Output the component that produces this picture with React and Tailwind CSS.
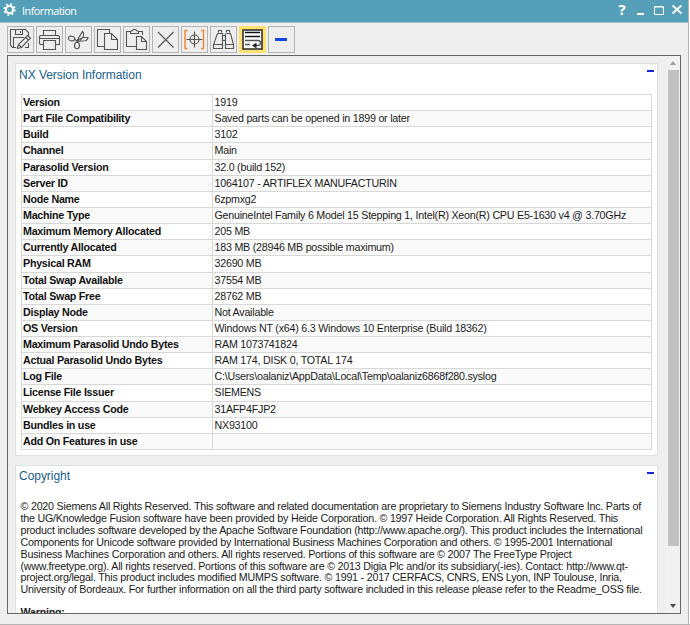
import React from "react";

const rows = [
  ["Version", "1919"],
  ["Part File Compatibility", "Saved parts can be opened in 1899 or later"],
  ["Build", "3102"],
  ["Channel", "Main"],
  ["Parasolid Version", "32.0 (build 152)"],
  ["Server ID", "1064107 - ARTIFLEX MANUFACTURIN"],
  ["Node Name", "6zpmxg2"],
  ["Machine Type", "GenuineIntel Family 6 Model 15 Stepping 1, Intel(R) Xeon(R) CPU E5-1630 v4 @ 3.70GHz"],
  ["Maximum Memory Allocated", "205 MB"],
  ["Currently Allocated", "183 MB (28946 MB possible maximum)"],
  ["Physical RAM", "32690 MB"],
  ["Total Swap Available", "37554 MB"],
  ["Total Swap Free", "28762 MB"],
  ["Display Node", "Not Available"],
  ["OS Version", "Windows NT (x64) 6.3 Windows 10 Enterprise (Build 18362)"],
  ["Maximum Parasolid Undo Bytes", "RAM 1073741824"],
  ["Actual Parasolid Undo Bytes", "RAM 174, DISK 0, TOTAL 174"],
  ["Log File", "C:\\Users\\oalaniz\\AppData\\Local\\Temp\\oalaniz6868f280.syslog"],
  ["License File Issuer", "SIEMENS"],
  ["Webkey Access Code", "31AFP4FJP2"],
  ["Bundles in use", "NX93100"],
  ["Add On Features in use", ""],
];

const copyright = [
  "© 2020 Siemens All Rights Reserved. This software and related documentation are proprietary to Siemens Industry Software Inc. Parts of",
  "the UG/Knowledge Fusion software have been provided by Heide Corporation. © 1997 Heide Corporation. All Rights Reserved. This",
  "product includes software developed by the Apache Software Foundation (http://www.apache.org/). This product includes the International",
  "Components for Unicode software provided by International Business Machines Corporation and others. © 1995-2001 International",
  "Business Machines Corporation and others. All rights reserved. Portions of this software are © 2007 The FreeType Project",
  "(www.freetype.org). All rights reserved. Portions of this software are © 2013 Digia Plc and/or its subsidiary(-ies). Contact: http://www.qt-",
  "project.org/legal. This product includes modified MUMPS software. © 1991 - 2017 CERFACS, CNRS, ENS Lyon, INP Toulouse, Inria,",
  "University of Bordeaux. For further information on all the third party software included in this release please refer to the Readme_OSS file.",
];

function Icon({ children }) {
  return (
    <svg className="block size-[25px]" viewBox="0 0 25 25" fill="none" stroke="#555" strokeWidth="1.1">
      {children}
    </svg>
  );
}

const tools = [
  <Icon key="save">
    <path d="M8 20.500H4.500L2.500 18.500V2.500H17.500L20.500 5.500V9M20.500 16V20.500H17" />
    <path d="M7.500 2.500V7.500H14.500V2.500M12.500 4V6M5.500 20V10.500H16" />
    <path d="M9 21.500L10.500 17.500L19.500 8.500L22.500 11L13.500 20.500L9 21.500M17.500 10.500L20.500 13M10.500 17.500L13.500 20.500" fill="#eee" />
  </Icon>,
  <Icon key="print">
    <path d="M6.500 8.500V3.500H18.500V8.500M6.500 17.500H3.500L2.500 16.500V9.500L3.500 8.500H21.500L22.500 9.500V17.500H18.500M3 11.500H22" />
    <path d="M6.500 13.500H18.500V22.500H6.500Z" />
  </Icon>,
  <Icon key="cut">
    <ellipse cx="5.500" cy="11.500" rx="3.200" ry="2.300" transform="rotate(12 5.500 11.500)" />
    <ellipse cx="11" cy="18.500" rx="2.500" ry="3.200" />
    <path d="M8.500 12L11 14.500L19 13.800Q22 13 22 10.500L17 10.500L12.500 12.500M11 15.500L12.500 11L16.500 4.500Q18.500 6.500 17 10L14 13.500" />
    <circle cx="12" cy="13.300" r=".8" />
  </Icon>,
  <Icon key="copy">
    <path d="M9 19.500H2.500V2.500H14.500V6" />
    <path d="M9.500 6.500H16.500L22.500 12.500V22.500H9.500ZM16.500 6.500V12.500H22.500" />
  </Icon>,
  <Icon key="paste">
    <path d="M12 19.500H2.500V4.500H6.500M14 4.500H18.500V8" />
    <path d="M6.500 6.500V4.500L8.500 3.500L9.500 2.500H11.500L12.500 3.500L14.500 4.500V6.500Z" />
    <path d="M12.500 9.500H17.500L22.500 14.500V22.500H12.500ZM17.500 9.500V14.500H22.500" />
  </Icon>,
  <Icon key="delete"><path d="M5 5L20.500 20.500M20.500 5L5 20.500" /></Icon>,
  <Icon key="target">
    <path d="M5.500 3.500H3V21.500H5.500M19 3.500H21.500V21.500H19" stroke="#f28a36" strokeWidth="1.5" />
    <circle cx="12.500" cy="12.500" r="4.500" /><path d="M12.500 4.500V20.500M4.500 12.500H20.500" />
  </Icon>,
  <Icon key="find">
    <path d="M7.500 5.500V3.500H10.500V5.500M15.500 5.500V3.500H18.500V5.500M6.500 6.500H11.500V21.500H2.500V17.500L6.500 6.500M15.500 6.500H19.500L22.500 17.500V21.500H14.500V6.500M2.500 17.500H11.500M14.500 17.500H22.500M11.500 8.500H14.500M11.500 13.500H14.500" />
  </Icon>,
  <Icon key="wrap">
    <rect x="3" y="3" width="19" height="19" fill="#fff" stroke="#333" strokeWidth="1.600" />
    <path d="M5 5.500H20M5 9.500H20" stroke="#111" strokeWidth="1.300" />
    <path d="M5 13.500H18Q20.500 13.500 20.500 16Q20.500 18.500 18 18.500H14M5 17.500H10" stroke="#555" strokeWidth="1.300" />
    <path d="M12 18.500L16.500 15.500V21.500Z" fill="#222" stroke="none" />
  </Icon>,
  <Icon key="collapse"><rect x="6" y="11" width="12" height="3" fill="#1444e4" stroke="none" /></Icon>,
];

function Card({ title, className, titleClass, children }) {
  return (
    <section className={"w-[643px] shrink-0 border border-[#e1e1e1] bg-white " + className}>
      <header className="flex h-[30px] justify-between pl-[3px] pr-[3px]">
        <h2 className={"text-[12px] leading-4 tracking-[-0.04px] text-[#17608a] " + titleClass}>{title}</h2>
        <span className="mt-[6px] h-[2px] w-[7px] bg-[#1428d8]" />
      </header>
      {children}
    </section>
  );
}

export default function App() {
  return (
    <div className="flex h-[625px] w-[690px] flex-col overflow-hidden bg-[#efefef] font-['Liberation_Sans',Arial,sans-serif]">
      <div className="flex min-h-0 flex-1">
        <main className="flex w-[688px] flex-col">
          <header className="flex h-[23px] items-center justify-between border-b border-[#9fc5d3] bg-[#559fb8] pl-[3px] pr-[5px] text-white">
            <div className="flex items-center gap-[6px]">
              <svg className="mb-[3px] size-[13px]" viewBox="0 0 13 13" fill="none" stroke="white">
                <circle cx="6.500" cy="6.500" r="3.600" strokeWidth="2" />
                <circle cx="6.500" cy="6.500" r="5.300" strokeWidth="1.800" strokeDasharray="2.080 2.080" />
              </svg>
              <h1 className="font-['Open_Sans','Noto_Sans',sans-serif] text-[10.800px] leading-4 tracking-[-0.5px]">Information</h1>
            </div>
            <svg className="h-[22px] w-[66px]" viewBox="617 0 66 22" fill="none" stroke="white">
              <text x="618.500" y="15" fill="white" stroke="none" fontFamily="Noto Sans, sans-serif" fontSize="15" fontWeight="700">?</text>
              <path d="M637 14H644" strokeWidth="2" />
              <path d="M654.500 6.500H663.500V14.500H654.500Z M654 7H664" />
              <path d="M672.500 5.500L681.500 13.500M681.500 5.500L672.500 13.500" strokeWidth="1.800" />
            </svg>
          </header>
          <nav className="flex h-[32px] gap-[2px] pl-[7px] pt-[3px]">
            {tools.map((tool, i) => (
              <button key={tool.key} className={"size-[27px] border " + (i === 8 ? "border-[#ffe071] bg-[#ffe071]" : "border-[#b4b4b4] bg-[#eeeeee]")}>{tool}</button>
            ))}
          </nav>
          <div className="ml-[7px] flex h-[559px] w-[674px] border border-[#666] bg-[#efefef]">
            <div className="flex w-[658px] flex-col gap-[9px] overflow-hidden pl-[7px] pt-[7px]">
              <Card title="NX Version Information" className="h-[393px]" titleClass="pt-[3px]">
                <div className="ml-[5px] grid h-[356px] w-[631px] auto-rows-fr border-b border-[#d8d8d8] text-[10.700px] leading-[15px] tracking-[-0.22px]">
                  {rows.map(([name, value], i) => (
                    <div key={name} className={"flex min-h-0 border-x border-t border-[#d8d8d8] " + (i % 2 ? "bg-[#fafafa]" : "bg-white")}>
                      <div className="w-[191px] border-r border-[#d8d8d8] pl-[1px] font-bold tracking-[-0.25px] whitespace-nowrap text-[#111]">{name}</div>
                      <div className="h-[15px] pl-[1.500px] tracking-[-0.23px] whitespace-nowrap text-[#1a1a1a]">{value}</div>
                    </div>
                  ))}
                </div>
              </Card>
              <Card title="Copyright" className="h-[190px]" titleClass="pt-[2px]">
                <div className="pl-[4.500px] pt-[5px] text-[10.700px] leading-[11.900px] tracking-[-0.215px] whitespace-nowrap text-[#1a1a1a]">
                  {copyright.map((line) => <p key={line}>{line}</p>)}
                  <p className="pt-[10.500px] font-bold">Warning:</p>
                </div>
              </Card>
            </div>
            <div className="flex w-[14px] flex-col items-center bg-[#f1f1f1]">
              <div className="flex h-[14px] items-center"><svg className="h-[4px] w-[6px]" viewBox="0 0 6 4"><path d="M0 4L3 0L6 4Z" fill="#a0a0a0" /></svg></div>
              <div className="h-[476px] w-[11px] bg-[#c1c1c1]" />
              <div className="flex flex-1 items-end pb-[5px]"><svg className="h-[4px] w-[6px]" viewBox="0 0 6 4"><path d="M0 0L3 4L6 0Z" fill="#505050" /></svg></div>
            </div>
          </div>
        </main>
        <div className="w-[2px] border-l border-[#b5b5b5] bg-white" />
      </div>
      <div className="h-px bg-[#b5b5b5]" />
    </div>
  );
}
